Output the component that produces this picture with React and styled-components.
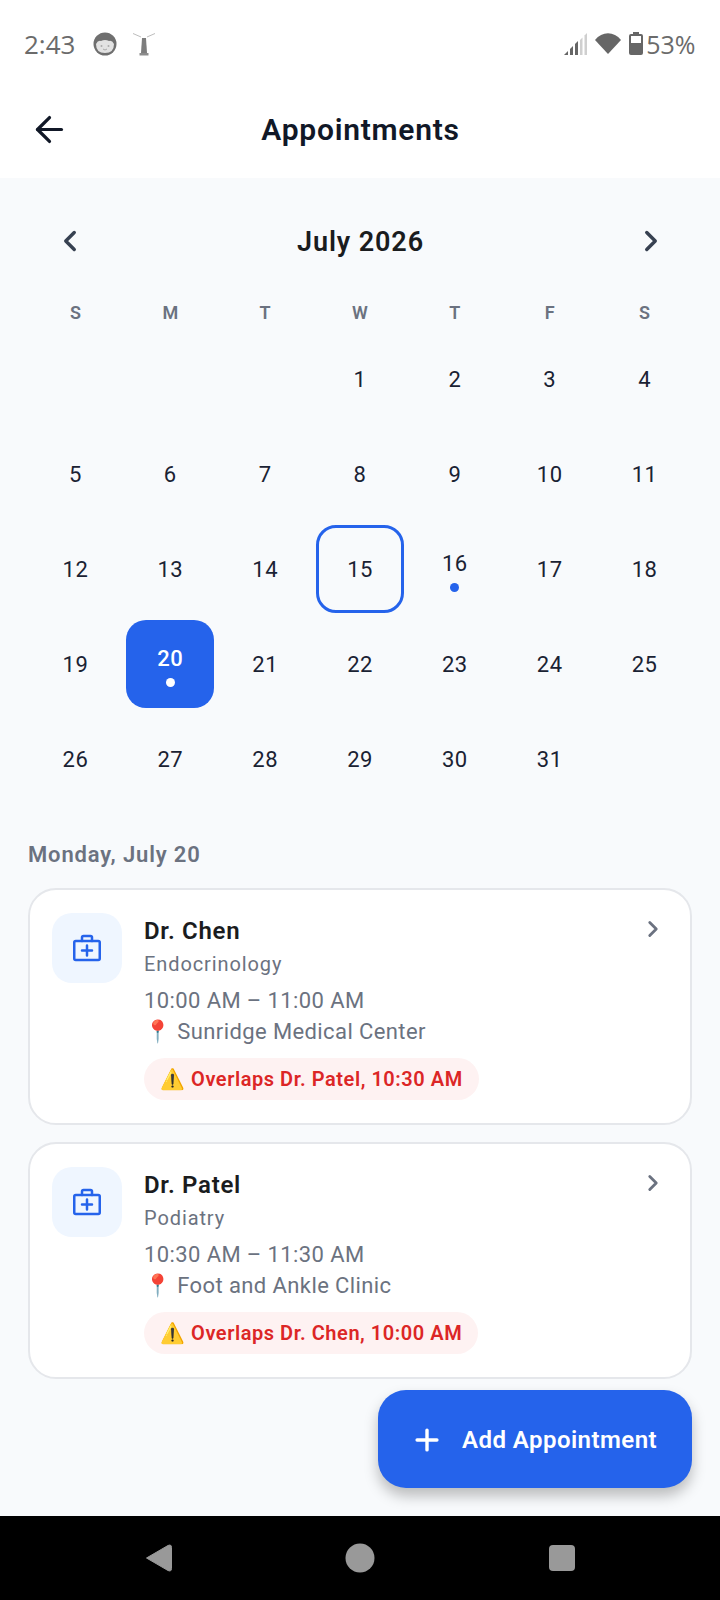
import React from "react"
import styled, { createGlobalStyle } from "styled-components"
import { ArrowLeft, ChevronLeft, ChevronRight, Plus } from "lucide-react"

const Global = createGlobalStyle`
    html, body { margin: 0; padding: 0; background: #fff; }
    * { box-sizing: border-box; }
    body { font-family: Roboto, "Noto Sans", sans-serif; }
`

const Page = styled.div`
    width: 720px;
    height: 1600px;
    position: relative;
    display: flex;
    flex-direction: column;
    overflow: hidden;
    background: #f8fafc;
`

const StatusBar = styled.div`
    height: 87px;
    flex: none;
    background: #fff;
    display: flex;
    align-items: center;
    justify-content: space-between;
    padding: 0 24.5px 0 24px;
    color: #6b6b6b;
    font-family: "Open Sans", sans-serif;
    font-size: 25px;
`

const Clock = styled.span`
    font-size: 26px;
`

const StatusGroup = styled.div`
    display: flex;
    align-items: center;
    gap: ${props => props.gap || 0}px;
`

const Header = styled.div`
    height: 91px;
    flex: none;
    background: #fff;
    display: grid;
    grid-template-columns: 56px 1fr 56px;
    align-items: center;
    padding: 0 28px 7px 29px;
    color: #111827;
`

const Title = styled.div`
    font-size: 30px;
    font-weight: 600;
    letter-spacing: 0.75px;
    text-align: center;
`

const Main = styled.div`
    flex: 1;
    padding: 28px 28px 0;
`

const MonthRow = styled.div`
    display: flex;
    align-items: center;
    justify-content: space-between;
    height: 70px;
    padding: 0 24px 0 25px;
    color: #374151;
`

const MonthName = styled.div`
    padding-top: 2px;
    font-size: 27px;
    font-weight: 600;
    letter-spacing: 0.9px;
    color: #1a1c1e;
`

const DayGrid = styled.div`
    display: grid;
    grid-template-columns: repeat(7, 1fr);
`

const WeekDay = styled.div`
    height: 34px;
    margin-top: 19px;
    margin-bottom: 3px;
    display: flex;
    align-items: center;
    justify-content: center;
    font-size: 18px;
    font-weight: 600;
    color: #6b7280;
`

const Cell = styled.div`
    padding: 3.43px;
    height: 95px;
`

const Day = styled.div`
    height: 88px;
    padding-top: ${props => props.marked ? 4 : 0}px;
    display: flex;
    flex-direction: column;
    align-items: center;
    justify-content: center;
    border-radius: 20px;
    font-size: 22px;
    font-weight: ${props => props.selected ? 500 : 450};
    letter-spacing: 0.5px;
    color: ${props => props.selected ? "#fff" : "#1a2233"};
    background: ${props => props.selected ? "#2563eb" : "transparent"};
    border: ${props => props.today ? "3px solid #2563eb" : "none"};
`

const Dot = styled.div`
    width: 9px;
    height: 9px;
    border-radius: 50%;
    margin-top: 7px;
    background: ${props => props.selected ? "#fff" : "#2563eb"};
`

const DateHeading = styled.div`
    margin-top: 32px;
    font-size: 22px;
    font-weight: 600;
    letter-spacing: 0.85px;
    color: #6b7280;
    line-height: 32px;
`

const Card = styled.div`
    margin-top: 17px;
    height: 237px;
    background: #fff;
    border: 2px solid #e5e7eb;
    border-radius: 28px;
    padding: 23px 22px;
    display: flex;
    gap: 22px;
`

const IconBox = styled.div`
    width: 70px;
    height: 70px;
    flex: none;
    border-radius: 20px;
    background: #eff6ff;
    display: flex;
    align-items: center;
    justify-content: center;
`

const CardBody = styled.div`
    flex: 1;
    display: flex;
    flex-direction: column;
    align-items: flex-start;
`

const DoctorName = styled.div`
    margin-top: 1px;
    font-size: 24px;
    font-weight: 600;
    letter-spacing: 0.7px;
    line-height: 34px;
    color: #1a1c1e;
`

const Specialty = styled.div`
    margin-top: 1px;
    font-size: 20px;
    letter-spacing: 0.9px;
    line-height: 30px;
    color: #6b7280;
`

const Detail = styled.div`
    font-size: 22px;
    letter-spacing: 0.4px;
    line-height: 31px;
    color: #6b7280;
`

const TimeLine = styled(Detail)`
    margin-top: 6px;
`

const Chip = styled.div`
    margin-top: 11px;
    height: 42px;
    padding: 0 16px;
    display: flex;
    align-items: center;
    border-radius: 21px;
    background: #fef2f2;
    color: #dc2626;
    font-size: 20px;
    font-weight: 600;
    letter-spacing: 0.55px;
`

const CardChevron = styled.div`
    flex: none;
    color: #6b7280;
    margin: 3px 2px 0 0;
`

const Fab = styled.button`
    position: absolute;
    left: 378px;
    top: 1390px;
    width: 314px;
    height: 98px;
    border: none;
    border-radius: 28px;
    background: #2563eb;
    color: #fff;
    display: flex;
    align-items: center;
    gap: 18px;
    padding: 2px 0 0 32px;
    font-family: Roboto, sans-serif;
    font-size: 24px;
    font-weight: 600;
    letter-spacing: 0.45px;
    box-shadow: 0 8px 14px rgba(0, 0, 0, 0.25);
`

const NavBar = styled.div`
    height: 84px;
    flex: none;
    background: #000;
    display: grid;
    grid-template-columns: repeat(3, 1fr);
    padding: 0 57px;
    align-items: center;
    justify-items: center;
`

const appointments = [
    { name: "Dr. Chen", spec: "Endocrinology", time: "10:00 AM – 11:00 AM", place: "Sunridge Medical Center", warn: "Overlaps Dr. Patel, 10:30 AM" },
    { name: "Dr. Patel", spec: "Podiatry", time: "10:30 AM – 11:30 AM", place: "Foot and Ankle Clinic", warn: "Overlaps Dr. Chen, 10:00 AM" },
]

function Face() {
    return <svg width="24" height="24" viewBox="0 0 24 24">
        <circle cx="12" cy="12" r="11.500" fill="#6f6f6f"/>
        <path d="M3 12Q5 8 8 9Q12 7 16 9Q19 8 21 12Q21 21 12 21Q3 21 3 12Z" fill="#e2e2e2"/>
        <circle cx="8.500" cy="14" r="1" fill="#aaa"/>
        <circle cx="15.500" cy="14" r="1" fill="#aaa"/>
        <path d="M10 17Q12 19 14 17" stroke="#aaa" strokeWidth="1" fill="none"/>
    </svg>
}

function Lighthouse() {
    return <svg width="24" height="24" viewBox="0 0 24 24">
        <path d="M10 6h4l1 15H9z" fill="#7d7d7d"/>
        <path d="M7.500 21h9v2.500h-9z" fill="#8c8c8c"/>
        <path d="M1 1.500L9 5M23 1.500L15 5" stroke="#bdbdbd" strokeWidth="1"/>
    </svg>
}

function Signal() {
    return <svg width="23" height="22" viewBox="0 0 23 22">
        <path d="M0 22L4 18V22Z" fill="#666"/>
        <path d="M6 16L9 13V22H6Z" fill="#666"/>
        <path d="M11 11L14 8V22H11Z" fill="#666"/>
        <path d="M16 7L18.500 4.500V22H16Z" fill="#cfcfcf"/>
        <path d="M20.500 2.500L23 0V22H20.500Z" fill="#cfcfcf"/>
    </svg>
}

function Wifi() {
    return <svg width="26" height="21" viewBox="0 0 26 21">
        <path d="M13 21L0 7C7 -2 19 -2 26 7Z" fill="#666"/>
    </svg>
}

function Battery() {
    return <svg width="14" height="23" viewBox="0 0 14 23">
        <path d="M4 0h6v2h2a2 2 0 0 1 2 2v17a2 2 0 0 1-2 2H2a2 2 0 0 1-2-2V4a2 2 0 0 1 2-2h2z" fill="#666"/>
        <rect x="2" y="4" width="10" height="7" fill="#fff"/>
    </svg>
}

function MedicalCase() {
    return <svg width="28" height="28" viewBox="0 0 28 28" fill="none" stroke="#2563eb" strokeWidth="2.500" strokeLinecap="round" strokeLinejoin="round">
        <rect x="1.250" y="7" width="25.500" height="19" rx="1.500"/>
        <path d="M9 7V3.500A1.500 1.500 0 0 1 10.500 2h7A1.500 1.500 0 0 1 19 3.500V7"/>
        <path d="M14 11.500v10M9 16.500h10"/>
    </svg>
}

function NavBack() {
    return <svg width="27" height="30" viewBox="0 0 27 30">
        <path d="M1.500 15L23 2.500Q26.500 1 26.500 4.500V25.500Q26.500 29 23 27.500Z" fill="#999" stroke="#999" strokeLinejoin="round"/>
    </svg>
}

function NavHome() {
    return <svg width="30" height="30" viewBox="0 0 30 30"><circle cx="15" cy="15" r="14.500" fill="#999"/></svg>
}

function NavSquare() {
    return <svg width="28" height="28" viewBox="0 0 28 28"><rect x="1" y="1" width="26" height="26" rx="4" fill="#999"/></svg>
}

export default function App() {
    const days = [null, null, null]
    for (let d = 1; d <= 31; d++) days.push(d)

    return <Page>
        <Global/>

        <StatusBar>
            <StatusGroup gap={18}>
                <Clock>2:43</Clock>
                <StatusGroup gap={15}><Face/><Lighthouse/></StatusGroup>
            </StatusGroup>
            <StatusGroup gap={3}>
                <StatusGroup gap={8}><Signal/><Wifi/><Battery/></StatusGroup>
                <span>53%</span>
            </StatusGroup>
        </StatusBar>

        <Header>
            <ArrowLeft size={41} strokeWidth={1.9}/>
            <Title>Appointments</Title>
        </Header>

        <Main>
            <MonthRow>
                <ChevronLeft size={34} strokeWidth={2.4}/>
                <MonthName>July 2026</MonthName>
                <ChevronRight size={34} strokeWidth={2.4}/>
            </MonthRow>

            <DayGrid>
                {["S", "M", "T", "W", "T", "F", "S"].map((w, i) => <WeekDay key={i}>{w}</WeekDay>)}
                {days.map((d, i) => <Cell key={i}>
                    {d && <Day selected={d === 20} today={d === 15} marked={d === 16 || d === 20}>
                        {d}
                        {(d === 16 || d === 20) && <Dot selected={d === 20}/>}
                    </Day>}
                </Cell>)}
            </DayGrid>

            <DateHeading>Monday, July 20</DateHeading>

            {appointments.map(a => <Card key={a.name}>
                <IconBox><MedicalCase/></IconBox>
                <CardBody>
                    <DoctorName>{a.name}</DoctorName>
                    <Specialty>{a.spec}</Specialty>
                    <TimeLine>{a.time}</TimeLine>
                    <Detail>📍 {a.place}</Detail>
                    <Chip>⚠️ {a.warn}</Chip>
                </CardBody>
                <CardChevron><ChevronRight size={26} strokeWidth={2.6}/></CardChevron>
            </Card>)}
        </Main>

        <Fab><Plus size={34} strokeWidth={2.4}/>Add Appointment</Fab>

        <NavBar>
            <NavBack/><NavHome/><NavSquare/>
        </NavBar>
    </Page>
}
